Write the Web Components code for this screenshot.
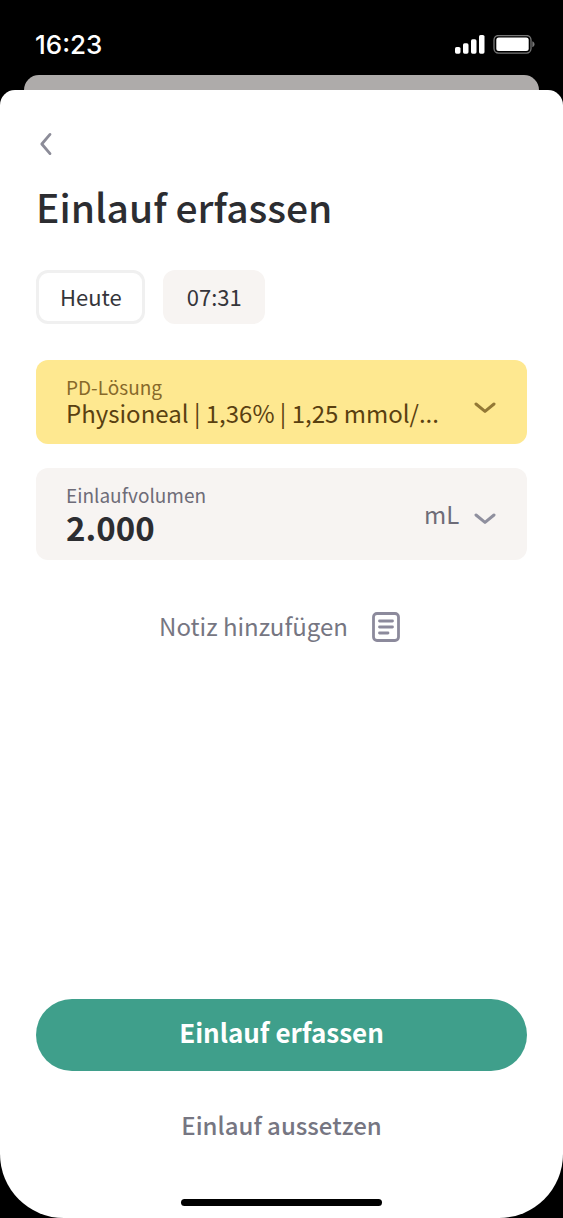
<!DOCTYPE html>
<html lang="de">
<head>
<meta charset="utf-8">
<meta name="viewport" content="width=device-width, initial-scale=1">
<title>Einlauf erfassen</title>
<style>
html, body { margin: 0; background: #000; }
body { font-family: "Noto Sans CJK SC", "Noto Sans", sans-serif; color: #2c2d31; }
</style>
</head>
<body>
<infusion-screen></infusion-screen>
<script>
const define = (name, html) => {
  const template = document.createElement('template');
  template.innerHTML = html;
  customElements.define(name, class extends HTMLElement {
    constructor() {
      super();
      this.attachShadow({ mode: 'open' }).append(template.content.cloneNode(true));
    }
  });
};

define('status-bar', `
<style>
:host { display: flex; align-items: center; justify-content: space-between; box-sizing: border-box;
  height: 75px; padding: 15px 28px 0 35px; color: #fff; font: 500 26px/30px Inter, sans-serif; }
svg { display: block; }
</style>
<time>16:23</time>
<svg width="80" height="20" viewBox="0 0 80 20" role="img" aria-label="Empfang und Akku">
  <g fill="#fff">
    <rect x="0" y="12" width="5.5" height="6.7" rx="1.6"/>
    <rect x="8" y="8.3" width="5.5" height="10.4" rx="1.6"/>
    <rect x="16" y="4.3" width="5.5" height="14.4" rx="1.6"/>
    <rect x="24" y="0" width="5.5" height="18.7" rx="1.6"/>
    <rect x="41.3" y="2.4" width="32.4" height="13.6" rx="2.5"/>
  </g>
  <rect x="39" y=".5" width="37" height="17.6" rx="4.5" fill="none" stroke="#777" stroke-width="1.3"/>
  <path d="M77.3 6.3c1.5.6 2.2 1.7 2.2 3s-.7 2.4-2.2 3z" fill="#777"/>
</svg>`);

define('chevron-icon', `
<style>:host { display: block; flex: none; } svg { display: block; }</style>
<svg width="22" height="12" viewBox="0 0 22 12" fill="none" stroke="currentColor" stroke-width="3" stroke-linecap="round" stroke-linejoin="round" aria-hidden="true"><path d="M2 2l9 7.4L20 2"/></svg>`);

define('back-button', `
<style>
:host { display: block; height: 36px; }
button { display: grid; place-items: center start; width: 36px; height: 36px; padding: 0 0 0 3px; border: 0; background: none; color: #8c8c98; cursor: pointer; }
</style>
<button type="button" aria-label="Zurück"><svg width="14" height="24" viewBox="0 0 14 24" fill="none" stroke="currentColor" stroke-width="2.8" stroke-linecap="round" stroke-linejoin="round"><path d="M11 2.4 2.8 12l8.2 9.6"/></svg></button>`);

define('date-chip', `
<style>
:host { display: block; }
button { box-sizing: border-box; height: 54px; padding: 0 20px 2px 21px; border: 3px solid #f7f4f2; border-radius: 12px;
  background: #f7f4f2; color: #35353a; font-family: inherit; font-size: 22px; line-height: 32px; cursor: pointer; }
:host([outlined]) button { background: #fff; border-color: #f0f0f0; }
</style>
<button type="button"><slot></slot></button>`);

define('solution-field', `
<style>
:host { display: flex; align-items: center; gap: 24px; box-sizing: border-box; padding: 17px 31px 13px 30px;
  border-radius: 12px; background: #fee890; color: #594010; }
.text { flex: 1; min-width: 0; }
label { display: block; font-size: 19px; line-height: 20px; color: #87692a; }
select { display: block; box-sizing: border-box; width: 100%; margin: 0; padding: 0 0 2px; border: 0; border-radius: 0; appearance: none;
  background: none; color: inherit; font-family: inherit; font-size: 24px; line-height: 32px; }
chevron-icon { margin-top: 8px; color: #937835; }
</style>
<div class="text">
  <label for="solution">PD-Lösung</label>
  <select id="solution"><option>Physioneal | 1,36% | 1,25 mmol/...</option></select>
</div>
<chevron-icon></chevron-icon>`);

define('volume-field', `
<style>
:host { display: flex; align-items: center; box-sizing: border-box; padding: 17px 31px 11px 30px;
  border-radius: 12px; background: #f7f4f2; }
.text { flex: 1; min-width: 0; }
label { display: block; font-size: 19px; line-height: 20px; color: #6e6c78; }
input { display: block; box-sizing: border-box; width: 100%; height: 44px; margin: 0; padding: 0; border: 0; background: none;
  color: #2c2d31; font-family: inherit; font-weight: 700; font-size: 33px; line-height: 44px; outline: 0; }
select { margin: 0 14px 0 0; padding: 0 0 6px; border: 0; appearance: none; background: none; color: #6e6c78;
  font-family: inherit; font-size: 24px; line-height: 36px; }
chevron-icon { margin-top: 4px; color: #8f8f9e; }
</style>
<div class="text">
  <label for="volume">Einlaufvolumen</label>
  <input id="volume" type="text" inputmode="numeric" value="2.000">
</div>
<select aria-label="Einheit"><option>mL</option></select>
<chevron-icon></chevron-icon>`);

define('note-button', `
<style>
:host { display: flex; justify-content: center; }
button { display: flex; align-items: center; gap: 24px; padding: 0 4px 0 0; border: 0; background: none; color: #767682;
  font-family: inherit; font-size: 24px; line-height: 36px; cursor: pointer; }
svg { display: block; margin-top: 2px; color: #8c8a9c; }
</style>
<button type="button"><span><slot></slot></span>
<svg width="28" height="30" viewBox="0 0 28 30" fill="none" stroke="currentColor" stroke-width="2.8" stroke-linecap="round" aria-hidden="true"><rect x="1.5" y="1.5" width="25" height="27" rx="3.5"/><path d="M7.5 9h13M7.5 15h13M7.5 21h8.5"/></svg></button>`);

define('action-button', `
<style>
:host { display: block; }
button { display: block; width: 100%; height: 48px; padding: 0; border: 0; background: none; color: #767682;
  font-family: inherit; font-size: 24px; line-height: 36px; font-weight: 500; cursor: pointer; }
:host([primary]) button { height: 72px; padding-bottom: 6px; border-radius: 36px; background: #3f9f8b; color: #fff; font-size: 26px; font-weight: 700; }
</style>
<button type="button"><slot></slot></button>`);

define('modal-sheet', `
<style>
:host { display: flex; flex-direction: column; flex: 1; }
.behind { height: 15px; margin: 0 24px; border-radius: 15px 15px 0 0; background: #aeabaa; }
.sheet { flex: 1; display: flex; flex-direction: column; box-sizing: border-box; padding: 36px 36px 12px;
  border-radius: 15px 15px 64px 64px; background: #fff; }
.body { flex: 1; }
.indicator { width: 201px; height: 7px; margin: 50px auto 0; border-radius: 4px; background: #000; }
</style>
<div class="behind"></div>
<main class="sheet">
  <div class="body"><slot></slot></div>
  <slot name="footer"></slot>
  <div class="indicator"></div>
</main>`);

define('infusion-screen', `
<style>
:host { display: flex; flex-direction: column; min-height: 100vh; }
h1 { margin: 14px 0 34px; font-size: 39px; line-height: 60px; font-weight: 500; }
.dates { display: flex; gap: 18px; margin-bottom: 36px; }
volume-field { margin: 24px 0 48px; }
.footer { display: grid; gap: 30px; padding-top: 48px; }
</style>
<status-bar></status-bar>
<modal-sheet>
  <back-button></back-button>
  <h1>Einlauf erfassen</h1>
  <div class="dates"><date-chip outlined>Heute</date-chip><date-chip>07:31</date-chip></div>
  <solution-field></solution-field>
  <volume-field></volume-field>
  <note-button>Notiz hinzufügen</note-button>
  <div class="footer" slot="footer">
    <action-button primary>Einlauf erfassen</action-button>
    <action-button>Einlauf aussetzen</action-button>
  </div>
</modal-sheet>`);
</script>
</body>
</html>
